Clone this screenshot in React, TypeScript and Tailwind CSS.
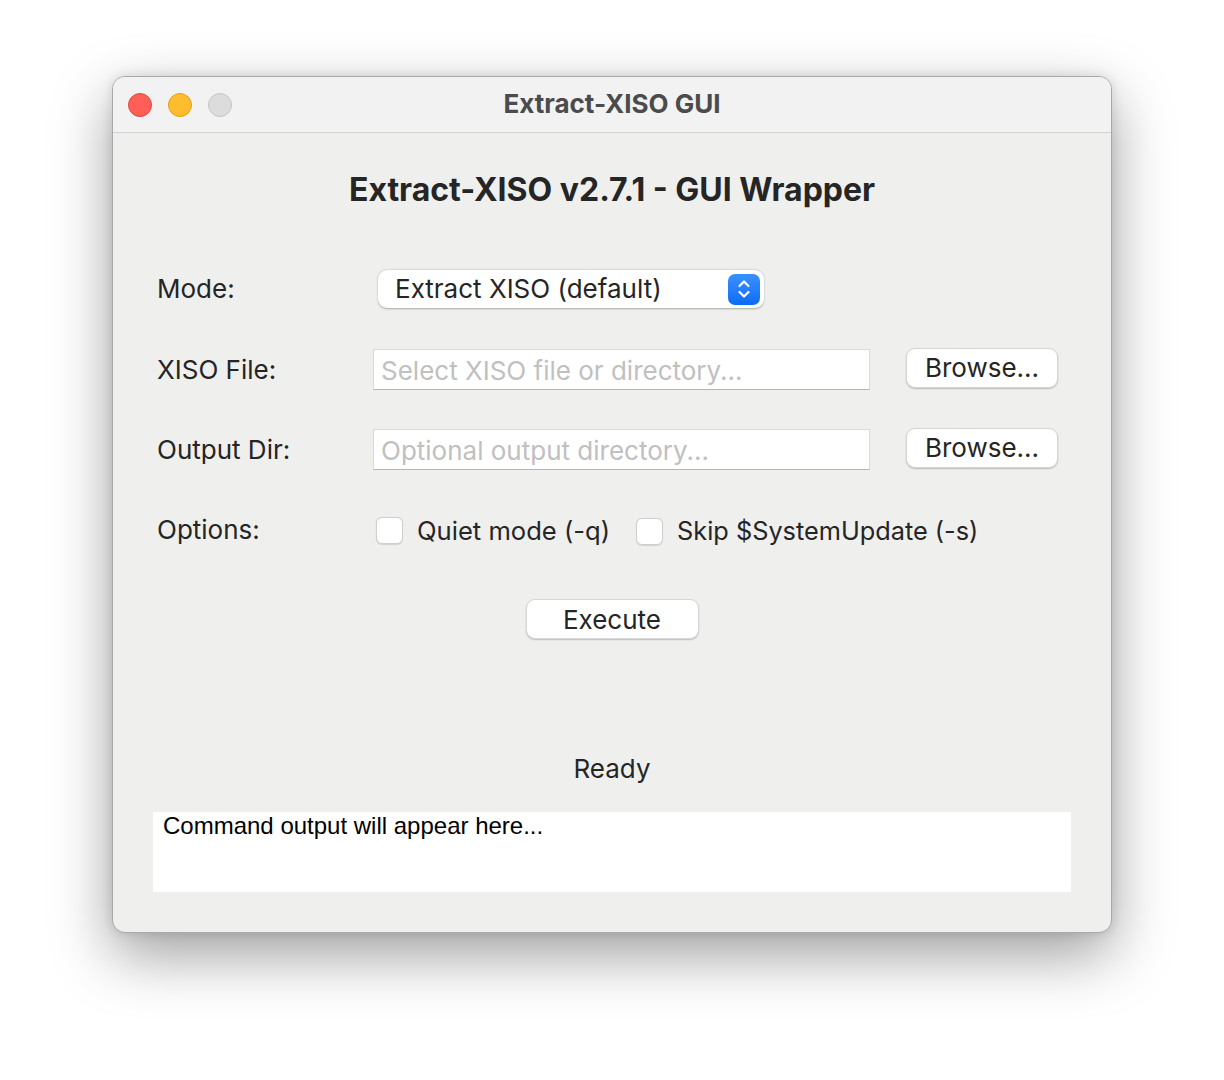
import React from "react";

const sf = { fontFamily: 'Inter, "Noto Sans", "Liberation Sans", sans-serif' };

function Stepper() {
  return (
    <div className="w-[32px] h-[31px] rounded-[7px] bg-gradient-to-b from-[#3b8fff] to-[#0a6cf5] flex items-center justify-center">
      <svg width="16" height="24" viewBox="0 0 16 24" fill="none">
        <path d="M3.5 9 L8 4.5 L12.5 9" stroke="white" strokeWidth="2.2" strokeLinecap="round" strokeLinejoin="round" />
        <path d="M3.5 15 L8 19.5 L12.5 15" stroke="white" strokeWidth="2.2" strokeLinecap="round" strokeLinejoin="round" />
      </svg>
    </div>
  );
}

function Button({ children, className = "" }: { children: React.ReactNode; className?: string }) {
  return (
    <div
      className={
        "h-[40px] bg-white rounded-[9px] border border-[#d6d6d6] shadow-[0_1px_1.5px_rgba(0,0,0,0.22)] flex items-center justify-center text-[26px] text-[#252525] " +
        className
      }
    >
      {children}
    </div>
  );
}

function Checkbox() {
  return (
    <div className="w-[27px] h-[27px] rounded-[6px] bg-white border border-[#cfcfcf] shadow-[0_0.5px_1px_rgba(0,0,0,0.12)]" />
  );
}

export default function App() {
  return (
    <div className="min-h-[1080px] w-full bg-white pt-[76px] pl-[112px]" style={sf}>
      <div className="w-[1000px] h-[857px] rounded-[13px] border border-[#a9a9a9] shadow-[0_22px_60px_rgba(0,0,0,0.38),0_0_12px_rgba(0,0,0,0.12)] overflow-hidden flex flex-col bg-[#efefee]">
        {/* Title bar */}
        <div className="h-[56px] shrink-0 bg-[#f2f2f2] border-b border-[#d3d3d3] flex items-center relative">
          <div className="flex items-center gap-[16px] pl-[15px]">
            <div className="w-[24px] h-[24px] rounded-full bg-[#ff5f57] border border-[#e2463f]" />
            <div className="w-[24px] h-[24px] rounded-full bg-[#febc2e] border border-[#e1a116]" />
            <div className="w-[24px] h-[24px] rounded-full bg-[#dcdcdc] border border-[#c4c4c4]" />
          </div>
          <div className="absolute inset-0 flex items-center justify-center text-[26px] font-bold text-[#4b4b4b] pointer-events-none -mt-[2px]">
            Extract-XISO GUI
          </div>
        </div>

        {/* Body */}
        <div className="flex-1 flex flex-col">
          <div className="mt-[38px] text-center text-[32px] leading-[38px] font-bold text-[#252525]">
            Extract-XISO v2.7.1 - GUI Wrapper
          </div>

          {/* Mode row */}
          <div className="mt-[60px] flex items-center h-[40px] pl-[44px]">
            <div className="w-[216px] text-[26px] text-[#252525] -mt-[1px]">Mode:</div>
            <div className="ml-[5px] w-[386px] h-[38px] bg-white rounded-[9px] shadow-[0_0.5px_2px_rgba(0,0,0,0.3)] flex items-center justify-between pl-[17px] pr-[4px]">
              <span className="text-[26px] text-[#252525] -mt-[1px]">Extract XISO (default)</span>
              <Stepper />
            </div>
          </div>

          {/* XISO file row */}
          <div className="mt-[40px] flex items-center h-[40px] pl-[44px]">
            <div className="w-[216px] text-[26px] text-[#252525]">XISO File:</div>
            <div className="w-[497px] h-[41px] bg-white border border-[#d9d9d9] border-b-[#b5b5b5] flex items-center pl-[7px] pt-[2px] text-[26px] text-[#c0c0c0]">
              Select XISO file or directory...
            </div>
            <Button className="ml-[36px] w-[152px] -mt-[3px]">Browse...</Button>
          </div>

          {/* Output dir row */}
          <div className="mt-[40px] flex items-center h-[40px] pl-[44px]">
            <div className="w-[216px] text-[26px] text-[#252525]">Output Dir:</div>
            <div className="w-[497px] h-[41px] bg-white border border-[#d9d9d9] border-b-[#b5b5b5] flex items-center pl-[7px] pt-[2px] text-[26px] text-[#c0c0c0]">
              Optional output directory...
            </div>
            <Button className="ml-[36px] w-[152px] -mt-[3px]">Browse...</Button>
          </div>

          {/* Options row */}
          <div className="mt-[42px] flex items-center h-[40px] pl-[44px]">
            <div className="w-[219px] text-[26px] text-[#252525] -mt-[4px]">Options:</div>
            <div className="flex items-center gap-[14px]">
              <Checkbox />
              <span className="text-[25.6px] text-[#252525]">Quiet mode (-q)</span>
            </div>
            <div className="flex items-center gap-[14px] ml-[26px]">
              <Checkbox />
              <span className="text-[25.3px] text-[#252525]">Skip $SystemUpdate (-s)</span>
            </div>
          </div>

          {/* Execute */}
          <div className="mt-[48px] flex justify-center">
            <Button className="w-[173px]">Execute</Button>
          </div>

          {/* Status */}
          <div className="mt-[114px] text-center text-[26px] leading-[32px] text-[#252525]">Ready</div>

          {/* Output */}
          <div className="mt-[27px] mx-[40px] h-[80px] bg-white pl-[10px] pt-[1px]">
            <div
              className="text-[24px] leading-[26px] text-black"
              style={{ fontFamily: '"Liberation Sans", Arial, sans-serif' }}
            >
              Command output will appear here...
            </div>
          </div>
        </div>
      </div>
    </div>
  );
}
